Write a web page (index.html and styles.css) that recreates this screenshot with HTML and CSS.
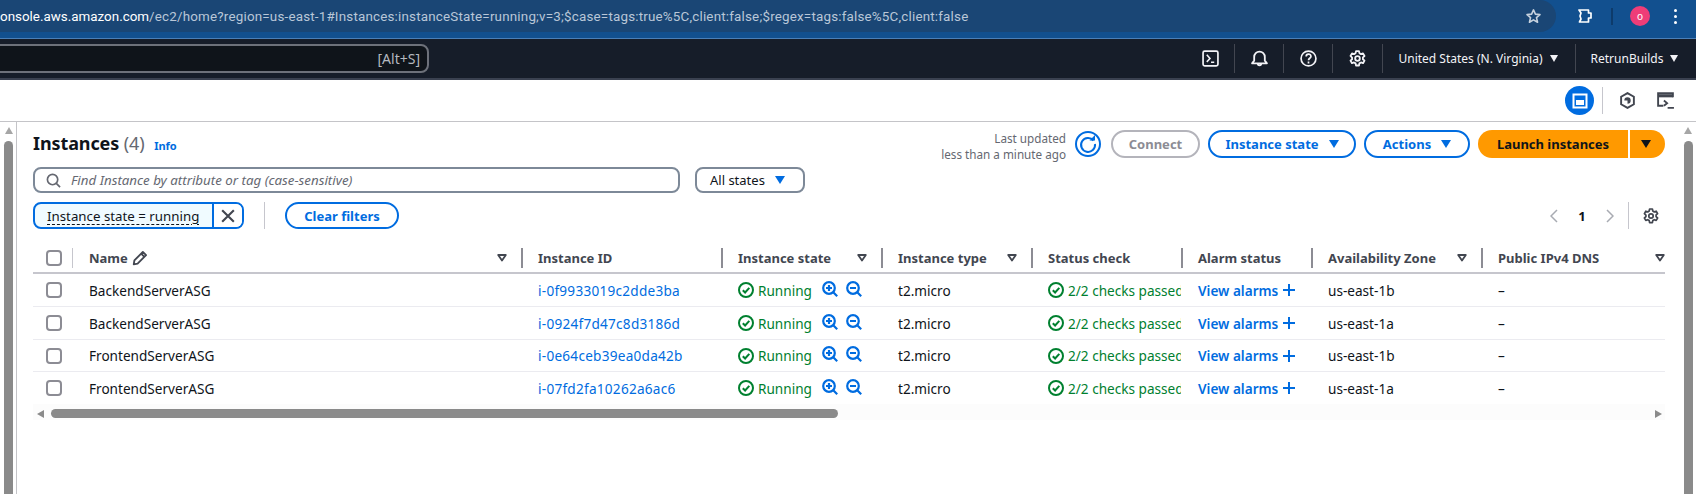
FILE: index.html
```html
<!DOCTYPE html>
<html lang="en">
<head>
<meta charset="utf-8">
<title>Instances | EC2</title>
<link rel="stylesheet" href="styles.css">
</head>
<body>
<svg class="sprite" aria-hidden="true">
  <symbol id="ok" viewBox="0 0 16 16"><circle cx="8" cy="8" r="7" fill="none" stroke="currentColor" stroke-width="2"/><path d="M4.800 8.200l2.300 2.300 4.200-4.600" fill="none" stroke="currentColor" stroke-width="2"/></symbol>
  <symbol id="zin" viewBox="0 0 16 16"><circle cx="7" cy="7" r="5.800" fill="none" stroke="currentColor" stroke-width="2.200"/><path d="M11 11l4.200 4.200M4 7h6M7 4v6" fill="none" stroke="currentColor" stroke-width="2.200"/></symbol>
  <symbol id="zout" viewBox="0 0 16 16"><circle cx="7" cy="7" r="5.800" fill="none" stroke="currentColor" stroke-width="2.200"/><path d="M11 11l4.200 4.200M4 7h6" fill="none" stroke="currentColor" stroke-width="2.200"/></symbol>
  <symbol id="plus" viewBox="0 0 12 12"><path d="M6 0v12M0 6h12" fill="none" stroke="currentColor" stroke-width="2"/></symbol>
  <symbol id="sort" viewBox="0 0 10 8"><path d="M1.200 1h7.600L5 6.600z" fill="none" stroke="currentColor" stroke-width="1.800" stroke-linejoin="round"/></symbol>
  <symbol id="gear" viewBox="0 0 16 16"><path d="M6.600 1h2.800l.4 2 1.500.9 1.900-.7 1.400 2.400-1.500 1.300v1.800l1.500 1.300-1.400 2.400-1.900-.7-1.500.9-.4 2H6.600l-.4-2-1.500-.9-1.900.7-1.400-2.400 1.500-1.300V7.100L1.400 5.600l1.400-2.400 1.900.7 1.500-.9z" fill="none" stroke="currentColor" stroke-width="1.700" stroke-linejoin="round"/><circle cx="8" cy="8" r="2.200" fill="none" stroke="currentColor" stroke-width="1.700"/></symbol>
</svg>

<header class="chrome">
  <div class="omnibox">
    <p class="url"><b>onsole.aws.amazon.com</b>/ec2/home?region=us-east-1#Instances:instanceState=running;v=3;$case=tags:true%5C,client:false;$regex=tags:false%5C,client:false</p>
    <svg class="star" viewBox="0 0 16 16"><path d="M8 1.800l1.800 4 4.300.4-3.300 2.900 1 4.300L8 11.200l-3.800 2.200 1-4.300-3.300-2.900 4.300-.4z" fill="none" stroke="currentColor" stroke-width="1.500" stroke-linejoin="round"/></svg>
  </div>
  <div class="chrome-tools">
    <svg class="puzzle" viewBox="0 0 18 18"><path d="M3 3h9.500v3H15v5h-2.500v4H3.500l1.500-3-1-3 1-3z" fill="none" stroke="currentColor" stroke-width="1.700" stroke-linejoin="round"/></svg>
    <span class="chrome-sep"></span>
    <span class="avatar">o</span>
    <span class="dots"><i></i><i></i><i></i></span>
  </div>
</header>

<nav class="topnav">
  <div class="search"><span>[Alt+S]</span></div>
  <div class="nav-right">
    <span class="nav-item nav-term"><svg class="nav-icon" viewBox="0 0 16 16"><rect x="1" y="1" width="14" height="14" rx="1.500" fill="none" stroke="currentColor" stroke-width="1.600"/><path d="M4.500 4.500L7.500 8l-3 3.200M8.500 11.500h3" fill="none" stroke="currentColor" stroke-width="1.500"/></svg></span>
    <span class="nav-item"><svg class="nav-icon" viewBox="0 0 16 16"><path d="M1 12.500h14l-2-2.500V6.500a5 5 0 0 0-10 0V10zM6.300 12.500c0 2.600 3.400 2.600 3.400 0" fill="none" stroke="currentColor" stroke-width="1.700" stroke-linejoin="round"/></svg></span>
    <span class="nav-item"><svg class="nav-icon" viewBox="0 0 16 16"><circle cx="8" cy="8" r="7" fill="none" stroke="currentColor" stroke-width="1.600"/><path d="M5.800 6.200c0-3 4.500-3 4.500-.2 0 1.800-2.300 1.800-2.300 3.600M8 10.800v1.800" fill="none" stroke="currentColor" stroke-width="1.600"/></svg></span>
    <span class="nav-item nav-gear"><svg class="nav-icon"><use href="#gear"/></svg></span>
    <span class="nav-item nav-region">United States (N. Virginia)<i class="caret-w"></i></span>
    <span class="nav-item nav-user">RetrunBuilds<i class="caret-w"></i></span>
  </div>
</nav>

<div class="utilbar">
  <span class="util-active"><svg viewBox="0 0 16 16"><path d="M1.500 1.500h13v13h-13z" fill="none" stroke="#fff" stroke-width="2"/><path d="M4 7h8v5H4z" fill="#fff"/></svg></span>
  <span class="util-sep"></span>
  <svg class="util-icon u1" viewBox="0 0 16 16"><path d="M8 1l6 3.500v7L8 15l-6-3.500v-7z" fill="none" stroke="currentColor" stroke-width="1.800"/><path d="M5 8a3 3 0 1 1 3 3V8z" fill="currentColor"/></svg>
  <svg class="util-icon u2" viewBox="0 0 18 18"><path d="M7 14H2V2h14v4" fill="none" stroke="currentColor" stroke-width="1.800"/><path d="M2 3h14v3H2z" fill="currentColor"/><path d="M7.500 9l3 2.500-3 2.500M11 16h6" fill="none" stroke="currentColor" stroke-width="1.800"/></svg>
</div>

<div class="workspace">
  <div class="vscroll vscroll-left"><i class="arrow-up"></i><i class="thumb"></i></div>
  <main class="panel">
    <section class="toolbar">
      <div class="title-col">
        <h1>Instances <span class="count">(4)</span> <a class="info">Info</a></h1>
        <div class="filter-row">
          <div class="find"><svg class="lens" viewBox="0 0 16 16"><circle cx="7" cy="7" r="5.500" fill="none" stroke="currentColor" stroke-width="1.800"/><path d="M11 11l4 4" stroke="currentColor" stroke-width="1.800"/></svg><em>Find Instance by attribute or tag (case-sensitive)</em></div>
          <div class="select">All states<i class="caret-b"></i></div>
        </div>
      </div>
      <div class="actions">
        <p class="updated">Last updated<br>less than a minute ago</p>
        <span class="refresh"><svg viewBox="0 0 26 26"><circle cx="13" cy="13" r="12" fill="none" stroke="currentColor" stroke-width="2"/><path d="M18.500 9.500A7 7 0 1 0 20 13" fill="none" stroke="currentColor" stroke-width="2"/><path d="M14.500 9.500h5.500V4z" fill="currentColor"/></svg></span>
        <span class="btn btn-off">Connect</span>
        <span class="btn btn-state">Instance state<i class="caret-b"></i></span>
        <span class="btn btn-actions">Actions<i class="caret-b"></i></span>
        <span class="launch"><span class="launch-main">Launch instances</span><span class="launch-drop"><i class="caret-k"></i></span></span>
      </div>
    </section>

    <section class="tokens">
      <div class="token"><span class="token-label"><u>Instance state = running</u></span><span class="token-x"><svg viewBox="0 0 12 12"><path d="M1 1l10 10M11 1L1 11" stroke="currentColor" stroke-width="1.800"/></svg></span></div>
      <span class="token-sep"></span>
      <span class="btn btn-clear">Clear filters</span>
      <div class="pager">
        <svg class="chev" viewBox="0 0 8 14"><path d="M7 1L1 7l6 6" fill="none" stroke="currentColor" stroke-width="1.500"/></svg>
        <b>1</b>
        <svg class="chev" viewBox="0 0 8 14"><path d="M1 1l6 6-6 6" fill="none" stroke="currentColor" stroke-width="1.500"/></svg>
        <span class="pager-sep"></span>
        <svg class="pager-gear"><use href="#gear"/></svg>
      </div>
    </section>

    <section class="table">
      <div class="row head">
        <div class="cell cb"><span class="box"></span></div>
        <div class="cell">Name <svg class="pencil" viewBox="0 0 14 14"><path d="M1.500 12.500l.6-3.400L9.500 1.700l2.800 2.800-7.400 7.400zM8 3.200l2.800 2.800" fill="none" stroke="currentColor" stroke-width="1.600" stroke-linejoin="round"/></svg><svg class="sort"><use href="#sort"/></svg></div>
        <div class="cell">Instance ID</div>
        <div class="cell">Instance state<svg class="sort"><use href="#sort"/></svg></div>
        <div class="cell">Instance type<svg class="sort"><use href="#sort"/></svg></div>
        <div class="cell">Status check</div>
        <div class="cell">Alarm status</div>
        <div class="cell">Availability Zone<svg class="sort"><use href="#sort"/></svg></div>
        <div class="cell cell-end">Public IPv4 DNS<svg class="sort"><use href="#sort"/></svg></div>
      </div>

      <div class="row">
        <div class="cell cb"><span class="box"></span></div>
        <div class="cell">BackendServerASG</div>
        <div class="cell"><a class="link id">i-0f9933019c2dde3ba</a></div>
        <div class="cell running"><svg class="ok"><use href="#ok"/></svg>Running<svg class="zoom zi"><use href="#zin"/></svg><svg class="zoom zo"><use href="#zout"/></svg></div>
        <div class="cell">t2.micro</div>
        <div class="cell running clip"><svg class="ok"><use href="#ok"/></svg>2/2 checks passed</div>
        <div class="cell"><a class="link alarm">View alarms<svg class="plus"><use href="#plus"/></svg></a></div>
        <div class="cell">us-east-1b</div>
        <div class="cell">–</div>
      </div>
      <div class="row">
        <div class="cell cb"><span class="box"></span></div>
        <div class="cell">BackendServerASG</div>
        <div class="cell"><a class="link id">i-0924f7d47c8d3186d</a></div>
        <div class="cell running"><svg class="ok"><use href="#ok"/></svg>Running<svg class="zoom zi"><use href="#zin"/></svg><svg class="zoom zo"><use href="#zout"/></svg></div>
        <div class="cell">t2.micro</div>
        <div class="cell running clip"><svg class="ok"><use href="#ok"/></svg>2/2 checks passed</div>
        <div class="cell"><a class="link alarm">View alarms<svg class="plus"><use href="#plus"/></svg></a></div>
        <div class="cell">us-east-1a</div>
        <div class="cell">–</div>
      </div>
      <div class="row">
        <div class="cell cb"><span class="box"></span></div>
        <div class="cell">FrontendServerASG</div>
        <div class="cell"><a class="link id">i-0e64ceb39ea0da42b</a></div>
        <div class="cell running"><svg class="ok"><use href="#ok"/></svg>Running<svg class="zoom zi"><use href="#zin"/></svg><svg class="zoom zo"><use href="#zout"/></svg></div>
        <div class="cell">t2.micro</div>
        <div class="cell running clip"><svg class="ok"><use href="#ok"/></svg>2/2 checks passed</div>
        <div class="cell"><a class="link alarm">View alarms<svg class="plus"><use href="#plus"/></svg></a></div>
        <div class="cell">us-east-1b</div>
        <div class="cell">–</div>
      </div>
      <div class="row last">
        <div class="cell cb"><span class="box"></span></div>
        <div class="cell">FrontendServerASG</div>
        <div class="cell"><a class="link id">i-07fd2fa10262a6ac6</a></div>
        <div class="cell running"><svg class="ok"><use href="#ok"/></svg>Running<svg class="zoom zi"><use href="#zin"/></svg><svg class="zoom zo"><use href="#zout"/></svg></div>
        <div class="cell">t2.micro</div>
        <div class="cell running clip"><svg class="ok"><use href="#ok"/></svg>2/2 checks passed</div>
        <div class="cell"><a class="link alarm">View alarms<svg class="plus"><use href="#plus"/></svg></a></div>
        <div class="cell">us-east-1a</div>
        <div class="cell">–</div>
      </div>
      <div class="hscroll"><i class="arrow-left"></i><i class="hthumb"></i><i class="arrow-right"></i></div>
    </section>
  </main>
  <div class="vscroll vscroll-right"><i class="arrow-up"></i><i class="thumb"></i></div>
</div>
</body>
</html>
```

FILE: styles.css
```css
* { box-sizing: border-box; }
html, body { margin: 0; padding: 0; }
body {
  width: 1696px;
  height: 494px;
  overflow: hidden;
  background: #fff;
  color: #0f141a;
  font-family: "Noto Sans", "Liberation Sans", sans-serif;
  font-size: 13px;
}
.sprite { display: none; }
p, h1 { margin: 0; }

/* browser chrome */
.chrome {
  height: 39px;
  display: flex;
  background: #12508f;
  border-bottom: 1px solid #4a7fb8;
}
.omnibox {
  width: 1556px;
  height: 32px;
  display: flex;
  align-items: center;
  background: #1a4675;
  border-radius: 0 16px 16px 0;
}
.url {
  flex: 1;
  white-space: nowrap;
  font-family: "Roboto", sans-serif;
  font-size: 13.400px;
  letter-spacing: 0.19px;
  color: #b9c7d8;
}
.url b { font-weight: 400; color: #fff; letter-spacing: 0; }
.star { width: 17px; height: 17px; margin-right: 14px; color: #c7d2de; }
.chrome-tools { flex: 1; height: 32px; display: flex; align-items: center; padding-left: 20px; }
.puzzle { width: 18px; height: 18px; color: #fff; }
.chrome-sep { width: 2px; height: 17px; margin: 0 17px 0 17px; background: #0d3b6b; }
.avatar {
  width: 20px; height: 20px; border-radius: 50%;
  display: flex; align-items: center; justify-content: center;
  background: #ef3d78; color: #fff; font-size: 10px;
}
.dots { display: flex; flex-direction: column; gap: 3px; margin-left: 24px; }
.dots i { width: 3px; height: 3px; border-radius: 50%; background: #fff; }

/* aws nav */
.topnav {
  height: 41px;
  display: flex;
  align-items: center;
  justify-content: space-between;
  background: #161d29;
  border-bottom: 2px solid #3a4150;
}
.search {
  width: 431px;
  height: 29px;
  display: flex;
  align-items: center;
  justify-content: flex-end;
  padding-right: 7px;
  margin-left: -2px;
  background: #0f141a;
  border: 2px solid #6d717a;
  border-radius: 0 8px 8px 0;
  color: #b4b8bf;
  font-size: 14px;
}
.nav-right { display: flex; align-items: center; height: 29px; color: #f3f3f7; font-size: 12px; }
.nav-item {
  height: 29px;
  display: flex;
  align-items: center;
  justify-content: center;
  width: 49px;
  border-left: 1px solid #424650;
}
.nav-term { border-left: 0; width: 47px; }
.nav-gear { width: 50px; }
.nav-icon { width: 17px; height: 17px; }
.nav-region { width: 193px; padding-right: 2px; }
.nav-user { width: 121px; padding-right: 3px; }
.caret-w {
  margin-left: 7px;
  border-top: 7px solid #f3f3f7;
  border-left: 4.500px solid transparent;
  border-right: 4.500px solid transparent;
}

/* utility bar */
.utilbar {
  height: 42px;
  display: flex;
  align-items: center;
  justify-content: flex-end;
  padding-right: 21px;
  border-bottom: 1px solid #c4c4c8;
  color: #424650;
}
.util-active {
  width: 29px; height: 29px; border-radius: 50%;
  display: flex; align-items: center; justify-content: center;
  background: #006ce0;
}
.util-active svg { width: 16px; height: 16px; }
.util-sep { width: 1px; height: 27px; margin: 0 16px 0 8px; background: #c6c6cd; }
.util-icon { width: 17px; height: 17px; }
.u2 { width: 19px; height: 19px; margin-left: 20px; }

/* workspace */
.workspace { display: flex; height: 372px; }
.vscroll { width: 13px; display: flex; flex-direction: column; align-items: center; padding-top: 5px; }
.vscroll-left { width: 16px; margin-right: 17px; padding-right: 3px; padding-left: 4px; box-shadow: 1px 0 0 #c4c4c8; }
.vscroll-right { margin-left: 18px; margin-right: 3px; }
.arrow-up {
  border-bottom: 7px solid #a6a6a6;
  border-left: 4.500px solid transparent;
  border-right: 4.500px solid transparent;
}
.thumb { width: 9px; flex: 1; margin-top: 7px; background: #8a8a8a; border-radius: 5px 5px 0 0; }
.panel { width: 1632px; }

.toolbar { display: flex; justify-content: space-between; padding-top: 8px; height: 80px; }
.title-col { display: flex; flex-direction: column; }
h1 { font-size: 18px; line-height: 26px; font-weight: 700; height: 37px; white-space: nowrap; letter-spacing: -0.1px; }
.count { font-weight: 400; color: #656871; }
.info { font-size: 11px; color: #006ce0; margin-left: 5px; letter-spacing: 0; }
.filter-row { display: flex; gap: 15px; }
.find {
  width: 647px; height: 26px;
  display: flex; align-items: center;
  padding-left: 11px;
  border: 2px solid #7d8998;
  border-radius: 8px;
  color: #656871;
  font-size: 13.300px;
}
.lens { width: 15px; height: 15px; margin-right: 10px; }
.select {
  width: 110px; height: 26px;
  display: flex; align-items: center;
  padding-left: 13px;
  border: 2px solid #7d8998;
  border-radius: 8px;
  font-size: 13px;
}
.caret-b {
  margin-left: 10px;
  border-top: 8px solid #006ce0;
  border-left: 5.500px solid transparent;
  border-right: 5.500px solid transparent;
}
.actions { display: flex; align-items: flex-start; height: 28px; }
.updated { text-align: right; font-size: 11.700px; line-height: 16px; color: #656871; margin-right: 9px; }
.refresh { width: 26px; height: 26px; margin: 1px 10px 0 0; color: #006ce0; }
.refresh svg { width: 26px; height: 26px; display: block; }
.btn {
  height: 28px;
  display: flex; align-items: center; justify-content: center;
  border: 2px solid #006ce0;
  border-radius: 14px;
  color: #006ce0;
  font-weight: 700;
  font-size: 13px;
}
.btn-off { width: 89px; margin-right: 8px; color: #8c8c94; border-color: #b4b4bb; }
.btn-state { width: 148px; margin-right: 8px; }
.btn-actions { width: 106px; margin-right: 8px; }
.launch { display: flex; width: 187px; height: 28px; font-weight: 700; font-size: 13px; }
.launch-main {
  width: 150px;
  display: flex; align-items: center; justify-content: center;
  background: #ff9900;
  border-radius: 14px 0 0 14px;
}
.launch-drop {
  flex: 1;
  margin-left: 2px;
  display: flex; align-items: center; justify-content: center;
  background: #ff9900;
  border-radius: 0 14px 14px 0;
}
.caret-k {
  margin-right: 4px;
  border-top: 8px solid #0f141a;
  border-left: 5.500px solid transparent;
  border-right: 5.500px solid transparent;
}

/* tokens row */
.tokens { display: flex; align-items: center; height: 27px; }
.token {
  width: 211px; height: 27px;
  display: flex;
  border: 2px solid #006ce0;
  border-radius: 8px;
  background: #f0fbff;
}
.token-label { flex: 1; display: flex; align-items: center; padding-left: 12px; font-size: 13.300px; white-space: nowrap; }
.token-label u { text-decoration: underline dashed 1px; text-underline-offset: 3px; }
.token-x {
  width: 30px;
  display: flex; align-items: center; justify-content: center;
  border-left: 2px solid #006ce0;
  background: #fff;
  border-radius: 0 6px 6px 0;
  color: #424650;
}
.token-x svg { width: 14px; height: 14px; }
.token-sep { width: 1px; height: 27px; margin: 0 20px; background: #c6c6cd; }
.btn-clear { width: 114px; height: 27px; }
.pager { margin-left: auto; margin-right: 6px; display: flex; align-items: center; color: #0f141a; font-size: 13px; }
.chev { width: 8px; height: 14px; color: #a8abb2; }
.pager b { width: 48px; text-align: center; font-weight: 700; }
.pager-sep { width: 1px; height: 27px; margin: 0 14px; background: #c6c6cd; }
.pager-gear { width: 16px; height: 16px; color: #424650; }

/* table */
.row {
  display: grid;
  grid-template-columns: 39px 449px 200px 160px 150px 150px 130px 170px 184px;
  height: 33px;
  border-bottom: 1px solid #ebebf0;
  font-size: 13.600px;
}
.row:nth-child(4), .row:nth-child(5) { height: 32px; }
.row.last { border-bottom: 0; }
.cell {
  display: flex;
  align-items: center;
  padding-left: 17px;
  white-space: nowrap;
  min-width: 0;
}
.clip { overflow: hidden; }
.cell.cb { padding-left: 13px; }
.box { width: 16px; height: 16px; border: 2px solid #8c8c94; border-radius: 4px; background: #fff; }
.head {
  height: 45px;
  padding-top: 19px;
  border-bottom: 2px solid #c6c6cd;
  color: #424650;
  font-weight: 700;
  font-size: 13px;
}
.head .cell {
  height: 20px;
  padding-left: 15px;
  padding-right: 14px;
  border-left: 2px solid #8c8c94;
}
.head .cell.cb { border-left: 0; padding-left: 13px; padding-right: 0; }
.head .cell:nth-child(2) { border-left: 1px solid #c6c6cd; padding-left: 16px; }
.head .cell.cell-end { padding-right: 0; }
.pencil { width: 16px; height: 16px; margin-left: 4px; color: #424650; }
.sort { width: 10px; height: 8px; margin-left: auto; color: #424650; }
.link { color: #006ce0; }
.id { letter-spacing: 0.25px; }
.running { color: #00802f; }
.ok { width: 16px; height: 16px; margin-right: 4px; flex: none; }
.zoom { width: 16px; height: 16px; color: #006ce0; margin-top: -3px; flex: none; }
.zi { margin-left: 10px; }
.zo { margin-left: 8px; }
.alarm { display: flex; align-items: center; font-weight: 600; }
.plus { width: 12px; height: 12px; margin-left: 5px; }

.hscroll {
  height: 16px;
  width: 1632px;
  display: flex;
  align-items: center;
  padding: 5px 0 2px;
  background: #fcfcfc;
}
.hthumb { width: 787px; height: 9px; margin-left: 7px; background: #8a8a8a; border-radius: 5px; }
.arrow-left {
  margin-left: 4px;
  border-right: 7px solid #8a8a8a;
  border-top: 4.500px solid transparent;
  border-bottom: 4.500px solid transparent;
}
.arrow-right {
  margin-left: auto;
  margin-right: 3px;
  border-left: 7px solid #8a8a8a;
  border-top: 4.500px solid transparent;
  border-bottom: 4.500px solid transparent;
}
```
